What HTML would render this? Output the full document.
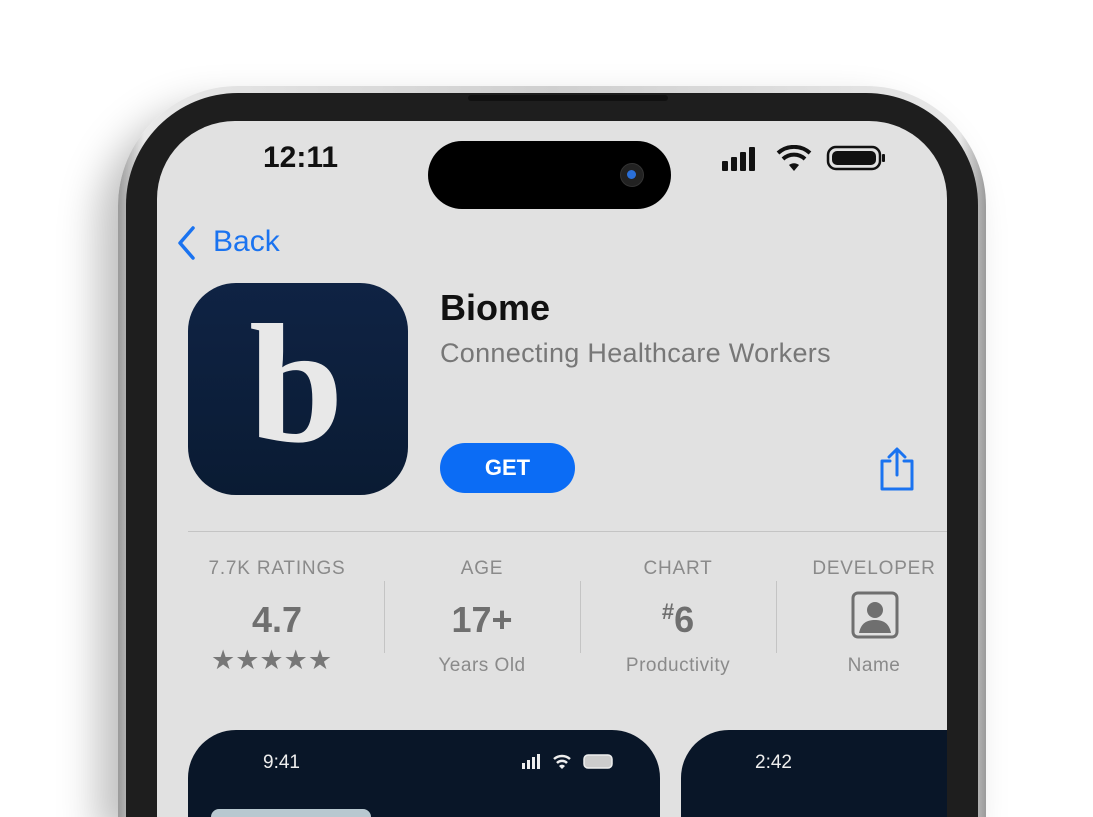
<!DOCTYPE html>
<html style="height:817px;overflow:hidden"><head><style>
html,body{margin:0;width:1093px;height:817px;overflow:hidden}
body{background:#fff;position:relative;font-family:"Liberation Sans",sans-serif}
.abs{position:absolute}
.outer{left:118px;top:86px;width:868px;height:731px;border-radius:120px 120px 0 0;background:linear-gradient(90deg,#9a9a9a,#e8e8e8 3%,#cfcfcf 50%,#e8e8e8 97%,#9a9a9a);box-shadow:-20px 20px 40px rgba(0,0,0,.25)}
.frame{left:126px;top:93px;width:852px;height:724px;border-radius:112px 112px 0 0;background:#1e1e1e}
.screen{left:157px;top:121px;width:790px;height:696px;border-radius:78px 78px 0 0;background:#e1e1e1;overflow:hidden}
.t{position:absolute;white-space:nowrap}
.lab{font-size:19px;color:#8a8a8a;letter-spacing:.8px;text-align:center;width:190px}
.big{font-size:36px;color:#6f6f6f;font-weight:bold;text-align:center;width:190px}
.sub{font-size:19px;color:#8a8a8a;text-align:center;width:190px;letter-spacing:.5px}
.div{position:absolute;width:1px;height:72px;background:#c4c4c4;top:460px}
</style></head><body>
<div class="abs outer"></div>
<div class="abs frame"></div>
<div class="abs" style="left:468px;top:95px;width:200px;height:6px;background:#111;border-radius:3px"></div>
<div class="abs screen">
  <div class="t" style="left:106px;top:20px;font-size:30px;font-weight:bold;color:#111">12:11</div>
  <div class="abs" style="left:271px;top:20px;width:243px;height:68px;border-radius:34px;background:#000"></div>
  <div class="abs" style="left:463px;top:42px;width:22px;height:22px;border-radius:50%;background:#222;border:1px solid #333"></div>
  <div class="abs" style="left:470px;top:49px;width:9px;height:9px;border-radius:50%;background:#2a6fd8"></div>
  <svg class="abs" style="left:563px;top:24px" width="170" height="28">
    <rect x="2" y="16" width="6" height="10" rx="1" fill="#111"/><rect x="11" y="12" width="6" height="14" rx="1" fill="#111"/><rect x="20" y="7" width="6" height="19" rx="1" fill="#111"/><rect x="29" y="2" width="6" height="24" rx="1" fill="#111"/>
    <path d="M58 8a24 24 0 0 1 32 0" stroke="#111" stroke-width="4" fill="none"/><path d="M63 14a16 16 0 0 1 22 0" stroke="#111" stroke-width="4" fill="none"/><path d="M74 26l-5-6a8 8 0 0 1 10 0z" fill="#111"/>
    <rect x="108" y="2" width="52" height="22" rx="8" fill="none" stroke="#111" stroke-width="2.5"/><rect x="112" y="6" width="44" height="14" rx="5" fill="#111"/><rect x="162" y="9" width="3" height="8" rx="1" fill="#111"/>
  </svg>
  <svg class="abs" style="left:18px;top:104px" width="24" height="36"><path d="M18 3L5 18l13 15" stroke="#1a73f0" stroke-width="3.5" fill="none" stroke-linecap="round" stroke-linejoin="round"/></svg>
  <div class="t" style="left:56px;top:104px;font-size:30px;color:#1a73f0">Back</div>
  <div class="abs" style="left:31px;top:162px;width:220px;height:212px;border-radius:48px;background:linear-gradient(#0f2344,#0a1b33)"></div>
  <div class="t" style="left:92px;top:178px;font-family:'Liberation Serif',serif;font-size:170px;font-weight:bold;color:#e8e8e8;line-height:1">b</div>
  <div class="t" style="left:283px;top:166px;font-size:36px;font-weight:bold;color:#111">Biome</div>
  <div class="t" style="left:283px;top:217px;font-size:27px;color:#777;letter-spacing:.3px">Connecting Healthcare Workers</div>
  <div class="abs" style="left:283px;top:322px;width:135px;height:50px;border-radius:25px;background:#0b6cf5;color:#fff;font-weight:bold;font-size:22px;text-align:center;line-height:50px">GET</div>
  <svg class="abs" style="left:720px;top:326px" width="40" height="44"><path d="M13 14h-8v28h30v-28h-8M20 28V3M12 10l8-8 8 8" stroke="#1a73f0" stroke-width="3" fill="none" stroke-linejoin="round" stroke-linecap="round"/></svg>
  <div class="abs" style="left:31px;top:410px;width:759px;height:1px;background:#c4c4c4"></div>
  <div class="t lab" style="left:25px;top:437px">7.7K RATINGS</div>
  <div class="t big" style="left:25px;top:478px">4.7</div>
  <div class="t" style="left:54px;top:524px;font-size:27px;color:#777">★★★★★</div>
  <div class="div" style="left:227px"></div>
  <div class="t lab" style="left:230px;top:437px">AGE</div>
  <div class="t big" style="left:230px;top:478px">17+</div>
  <div class="t sub" style="left:230px;top:534px">Years Old</div>
  <div class="div" style="left:423px"></div>
  <div class="t lab" style="left:426px;top:437px">CHART</div>
  <div class="t big" style="left:426px;top:478px"><span style="font-size:22px;vertical-align:top">#</span>6</div>
  <div class="t sub" style="left:426px;top:534px">Productivity</div>
  <div class="div" style="left:619px"></div>
  <div class="t lab" style="left:622px;top:437px">DEVELOPER</div>
  <svg class="abs" style="left:694px;top:470px" width="48" height="48"><rect x="2" y="2" width="44" height="44" rx="5" fill="none" stroke="#6f6f6f" stroke-width="3"/><circle cx="24" cy="19" r="8" fill="#6f6f6f"/><path d="M8 42c2-10 8-13 16-13s14 3 16 13z" fill="#6f6f6f"/></svg>
  <div class="t sub" style="left:622px;top:534px">Name</div>
  <div class="abs" style="left:31px;top:609px;width:472px;height:87px;border-radius:48px 48px 0 0;background:#091628"></div>
  <div class="t" style="left:106px;top:631px;font-size:19px;color:#eee">9:41</div>
  <svg class="abs" style="left:364px;top:632px" width="95" height="18"><rect x="1" y="10" width="3" height="6" fill="#eee"/><rect x="6" y="7" width="3" height="9" fill="#eee"/><rect x="11" y="4" width="3" height="12" fill="#eee"/><rect x="16" y="1" width="3" height="15" fill="#eee"/><path d="M33 6a12 12 0 0 1 16 0M36 10a7 7 0 0 1 10 0" stroke="#eee" stroke-width="2.5" fill="none"/><path d="M41 16l-3-3a4 4 0 0 1 6 0z" fill="#eee"/><rect x="63" y="2" width="28" height="13" rx="4" fill="#ccc" stroke="#eee" stroke-width="1.5"/></svg>
  <div class="abs" style="left:54px;top:688px;width:160px;height:8px;border-radius:8px 8px 0 0;background:#b8c8d0"></div>
  <div class="abs" style="left:524px;top:609px;width:266px;height:87px;border-radius:48px 0 0 0;background:#091628"></div>
  <div class="t" style="left:598px;top:631px;font-size:19px;color:#eee">2:42</div>
</div>
</body></html>
